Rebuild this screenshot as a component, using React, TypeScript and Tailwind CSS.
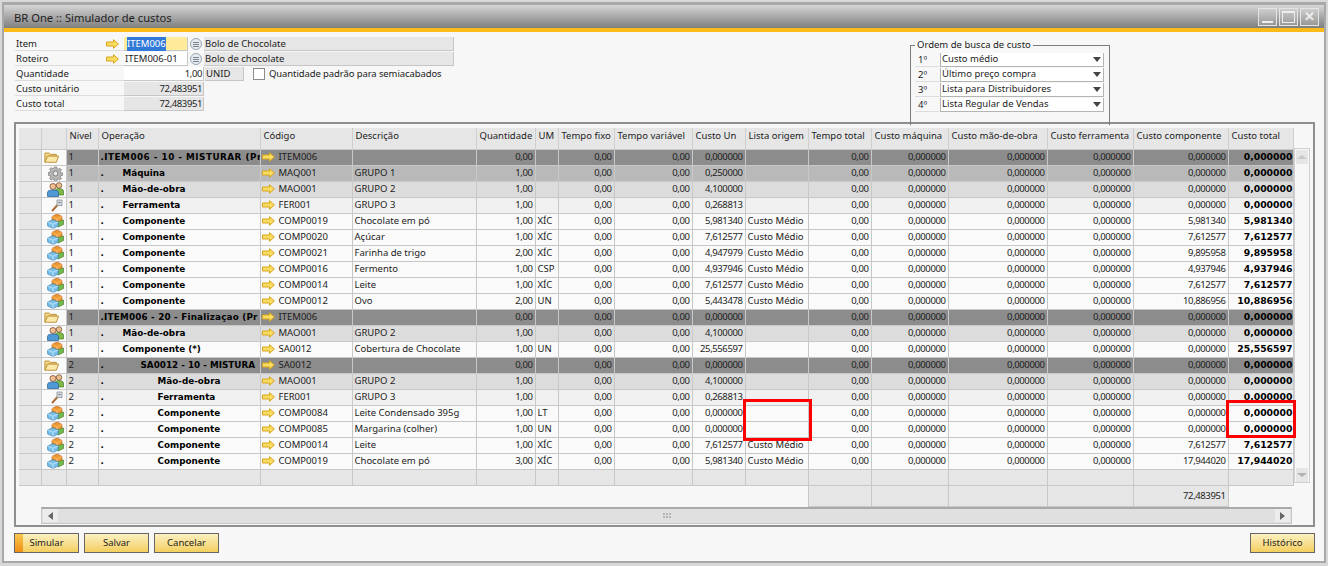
import React from "react"

type Kind = "group" | "maq" | "mao" | "fer" | "comp"

interface Row {
  kind: Kind
  nivel: string
  op: string
  indent?: string
  dot?: boolean
  code: string
  desc?: string
  qty: string
  um?: string
  un: string
  lista?: string
  comp?: string
  total?: string
}

const rows: Row[] = [
  { kind: "group", nivel: "1", op: ".ITEM006 - 10 - MISTURAR (Pr", indent: "tracking-[0.5px]", code: "ITEM006", qty: "0,00", un: "0,000000" },
  { kind: "maq", nivel: "1", op: "Máquina", dot: true, indent: "pl-[19px]", code: "MAQ001", desc: "GRUPO 1", qty: "1,00", un: "0,250000" },
  { kind: "mao", nivel: "1", op: "Mão-de-obra", dot: true, indent: "pl-[19px]", code: "MAO001", desc: "GRUPO 2", qty: "1,00", un: "4,100000" },
  { kind: "fer", nivel: "1", op: "Ferramenta", dot: true, indent: "pl-[19px]", code: "FER001", desc: "GRUPO 3", qty: "1,00", un: "0,268813" },
  { kind: "comp", nivel: "1", op: "Componente", dot: true, indent: "pl-[19px]", code: "COMP0019", desc: "Chocolate em pó", qty: "1,00", um: "XÍC", un: "5,981340", lista: "Custo Médio", comp: "5,981340", total: "5,981340" },
  { kind: "comp", nivel: "1", op: "Componente", dot: true, indent: "pl-[19px]", code: "COMP0020", desc: "Açúcar", qty: "1,00", um: "XÍC", un: "7,612577", lista: "Custo Médio", comp: "7,612577", total: "7,612577" },
  { kind: "comp", nivel: "1", op: "Componente", dot: true, indent: "pl-[19px]", code: "COMP0021", desc: "Farinha de trigo", qty: "2,00", um: "XÍC", un: "4,947979", lista: "Custo Médio", comp: "9,895958", total: "9,895958" },
  { kind: "comp", nivel: "1", op: "Componente", dot: true, indent: "pl-[19px]", code: "COMP0016", desc: "Fermento", qty: "1,00", um: "CSP", un: "4,937946", lista: "Custo Médio", comp: "4,937946", total: "4,937946" },
  { kind: "comp", nivel: "1", op: "Componente", dot: true, indent: "pl-[19px]", code: "COMP0014", desc: "Leite", qty: "1,00", um: "XÍC", un: "7,612577", lista: "Custo Médio", comp: "7,612577", total: "7,612577" },
  { kind: "comp", nivel: "1", op: "Componente", dot: true, indent: "pl-[19px]", code: "COMP0012", desc: "Ovo", qty: "2,00", um: "UN", un: "5,443478", lista: "Custo Médio", comp: "10,886956", total: "10,886956" },
  { kind: "group", nivel: "1", op: ".ITEM006 - 20 - Finalizaçao (Pr", indent: "tracking-[0.2px]", code: "ITEM006", qty: "0,00", un: "0,000000" },
  { kind: "mao", nivel: "1", op: "Mão-de-obra", dot: true, indent: "pl-[19px]", code: "MAO001", desc: "GRUPO 2", qty: "1,00", un: "4,100000" },
  { kind: "comp", nivel: "1", op: "Componente (*)", dot: true, indent: "pl-[19px]", code: "SA0012", desc: "Cobertura de Chocolate", qty: "1,00", um: "UN", un: "25,556597", total: "25,556597" },
  { kind: "group", nivel: "2", op: "SA0012 - 10 - MISTURA", dot: true, indent: "pl-[37px]", code: "SA0012", qty: "0,00", un: "0,000000" },
  { kind: "mao", nivel: "2", op: "Mão-de-obra", dot: true, indent: "pl-[54px]", code: "MAO001", desc: "GRUPO 2", qty: "1,00", un: "4,100000" },
  { kind: "fer", nivel: "2", op: "Ferramenta", dot: true, indent: "pl-[54px]", code: "FER001", desc: "GRUPO 3", qty: "1,00", un: "0,268813" },
  { kind: "comp", nivel: "2", op: "Componente", dot: true, indent: "pl-[54px]", code: "COMP0084", desc: "Leite Condensado 395g", qty: "1,00", um: "LT", un: "0,000000" },
  { kind: "comp", nivel: "2", op: "Componente", dot: true, indent: "pl-[54px]", code: "COMP0085", desc: "Margarina (colher)", qty: "1,00", um: "UN", un: "0,000000" },
  { kind: "comp", nivel: "2", op: "Componente", dot: true, indent: "pl-[54px]", code: "COMP0014", desc: "Leite", qty: "1,00", um: "XÍC", un: "7,612577", lista: "Custo Médio", comp: "7,612577", total: "7,612577" },
  { kind: "comp", nivel: "2", op: "Componente", dot: true, indent: "pl-[54px]", code: "COMP0019", desc: "Chocolate em pó", qty: "3,00", um: "XÍC", un: "5,981340", lista: "Custo Médio", comp: "17,944020", total: "17,944020" },
]

const headers = [
  "", "", "Nivel", "Operação", "Código", "Descrição", "Quantidade", "UM", "Tempo fixo", "Tempo variável", "Custo Un",
  "Lista origem", "Tempo total", "Custo máquina", "Custo mão-de-obra", "Custo ferramenta", "Custo componente", "Custo total",
]

const rowBg: Record<Kind, string> = {
  group: "bg-[#8c8c8c]",
  maq: "bg-[#b9b9b9]",
  mao: "bg-[#dcdcdc]",
  fer: "bg-[#f0f0f0]",
  comp: "bg-[#fafafa]",
}

const cell = "border-r border-b border-[#c8c8c8] px-[2px] overflow-hidden whitespace-nowrap"
const num = cell + " text-right tracking-[-0.4px]"

const Arrow = () => (
  <svg width="13" height="10" viewBox="0 0 13 10" className="shrink-0">
    <path d="M0.5 3h7V0.7L12.4 5 7.5 9.3V7h-7z" fill="#f7dc5e" stroke="#d9a520" strokeWidth="1" />
  </svg>
)

const Folder = () => (
  <svg width="17" height="14" viewBox="0 0 17 14" className="mr-[5px]">
    <path d="M1 2.5h5l1.5 1.5H14v2H4L1 12.5z" fill="#f5d98a" stroke="#b98a2e" />
    <path d="M4 6h12.5L14 13H1z" fill="#fbe7a8" stroke="#b98a2e" />
  </svg>
)

const Gear = () => (
  <svg width="15" height="15" viewBox="0 0 16 16" className="mr-[1px]">
    <path
      d="M6.8 1h2.4l.3 2 1.4.6 1.7-1.2 1.7 1.7-1.2 1.7.6 1.4 2 .3v2.4l-2 .3-.6 1.4 1.2 1.7-1.7 1.7-1.7-1.2-1.4.6-.3 2H6.8l-.3-2-1.4-.6-1.7 1.2-1.7-1.7 1.2-1.7-.6-1.4-2-.3V6.8l2-.3.6-1.4-1.2-1.7 1.7-1.7 1.7 1.2 1.4-.6z"
      fill="#b5b5b5"
      stroke="#7c7c7c"
      strokeWidth="0.8"
    />
    <circle cx="8" cy="8" r="2.6" fill="#e9e9e9" stroke="#7c7c7c" />
  </svg>
)

const People = () => (
  <svg width="17" height="15" viewBox="0 0 17 15">
    <circle cx="12" cy="3.5" r="2.8" fill="#e9b98a" stroke="#6d4a2a" strokeWidth="0.7" />
    <path d="M8 13V9c0-1.5 1.5-2.5 4-2.5s4.500 1 4.500 2.500v4z" fill="#7cb84a" stroke="#4d7d2a" strokeWidth="0.7" />
    <circle cx="6" cy="4.500" r="3" fill="#f0c090" stroke="#7a3a20" strokeWidth="0.7" />
    <path d="M0.500 14.500v-4C0.500 8.800 2.500 8 6 8s5.500 0.800 5.500 2.500v4z" fill="#4f9ad6" stroke="#1f5f95" strokeWidth="0.7" />
  </svg>
)

const Wrench = () => (
  <svg width="12" height="14" viewBox="0 0 12 14" className="mr-[1px]">
    <path d="M1.500 12.500l4.500-5" stroke="#a8703a" strokeWidth="2" strokeLinecap="round" />
    <path d="M6 2h5v5.500H6z" fill="#d5d8dc" stroke="#8a9096" strokeWidth="0.8" />
    <path d="M7.500 4.500h2" stroke="#6f757b" strokeWidth="1" />
  </svg>
)

const Box = () => (
  <svg width="17" height="16" viewBox="0 0 17 16">
    <path d="M5 3.500L10 1l5 2.500v6L10 12 5 9.500z" fill="#f0962e" stroke="#b9651a" strokeWidth="0.7" />
    <path d="M5 3.500L10 6l5-2.500M10 6v6" stroke="#f9cf8a" strokeWidth="0.7" fill="none" />
    <path d="M11 8.500l5.500-1.500v4.500L11 14z" fill="#74b84c" stroke="#4a8430" strokeWidth="0.7" />
    <path d="M0.700 9L6 6.700 11.300 9v4L6 15.300 0.700 13z" fill="#7cc0ea" stroke="#3a80b5" strokeWidth="0.7" />
    <path d="M0.700 9L6 11.300 11.300 9M6 11.300v4" stroke="#d5effc" strokeWidth="0.7" fill="none" />
  </svg>
)

const kindIcon: Record<Kind, React.ReactNode> = {
  group: <Folder />,
  maq: <Gear />,
  mao: <People />,
  fer: <Wrench />,
  comp: <Box />,
}

const Lookup = () => (
  <span className="ml-[2px] flex h-[12px] w-[12px] shrink-0 flex-col items-center justify-center gap-[1px] rounded-full border border-[#9aa6b2] bg-[#e8ecf0]">
    <span className="h-px w-[6px] bg-[#77828d]" />
    <span className="h-px w-[6px] bg-[#77828d]" />
    <span className="h-px w-[6px] bg-[#77828d]" />
  </span>
)

const FormLabel = ({ children, arrow }: { children: string; arrow?: boolean }) => (
  <div className="flex h-[14px] w-[109px] items-center justify-between border-b border-[#dcdcdc] pl-[1px] pr-[5px]">
    <span>{children}</span>
    {arrow && <Arrow />}
  </div>
)

const ReadOnly = ({ children, className }: { children: string; className: string }) => (
  <div className={"flex h-[14px] items-center border-b border-r border-[#c6c6c6] bg-[#e6e6e6] px-[1px] " + className}>{children}</div>
)

const Field = ({ children, className }: { children: React.ReactNode; className: string }) => (
  <div className={"flex h-[14px] items-center border-b border-r border-[#c6c6c6] px-[1px] " + className}>{children}</div>
)

const OrderRow = ({ n, text }: { n: string; text: string }) => (
  <div className="flex h-[15px] items-center">
    <span className="h-[14px] w-[24px] border-b border-[#dcdcdc] pl-[3px]">{n}</span>
    <div className="ml-[1px] flex h-[14px] w-[164px] items-center justify-between border-b border-r border-l border-[#b4b4b4] bg-white pl-[1px] pr-[2px]">
      <span>{text}</span>
      <span className="h-0 w-0 border-x-[4px] border-t-[5px] border-x-transparent border-t-[#444]" />
    </div>
  </div>
)

const Btn = ({ children, active }: { children: string; active?: boolean }) => (
  <button className="relative h-[20px] w-[65px] border border-[#666] bg-gradient-to-b from-[#fbf0c0] to-[#f4cf5c] text-center text-[#222]">
    {active && <span className="absolute inset-y-0 left-0 w-[8px] bg-gradient-to-b from-[#f9c84a] to-[#ee8f14]" />}
    <span className="relative">{children}</span>
  </button>
)

const WinBtn = ({ children }: { children: React.ReactNode }) => (
  <div className="flex h-[18px] w-[19px] items-center justify-center border border-[#e4e4e4] bg-[#ffffff22]">{children}</div>
)

export default function App() {
  return (
    <div className="h-[566px] w-[1328px] overflow-hidden bg-[#d8d8d8] pl-[2px] pr-[2px] pt-[2px] font-['Noto_Sans',sans-serif] text-[9.5px] leading-[14px] text-[#1c1c1c]">
      <div className="flex h-[561px] w-[1324px] flex-col border-2 border-t-[3px] border-[#a8a8a8] bg-[#f7f7f7]">
        {/* barra de título */}
        <div className="flex h-[23px] shrink-0 items-center justify-between bg-gradient-to-b from-[#d6d6d6] to-[#7f7f7f] pl-[10px] pr-[5px]">
          <span className="pt-[3px] text-[11.2px] text-[#222]">BR One :: Simulador de custos</span>
          <div className="flex gap-[2px]">
            <WinBtn><span className="mt-[10px] h-[2px] w-[11px] bg-[#eee]" /></WinBtn>
            <WinBtn><span className="h-[12px] w-[13px] border border-t-[2px] border-[#eee]" /></WinBtn>
            <WinBtn><span className="text-[13px] font-bold leading-none text-[#eee]">✕</span></WinBtn>
          </div>
        </div>
        <div className="h-[4px] shrink-0 bg-[#fdbb1a]" />

        {/* cabeçalho do formulário */}
        <div className="flex h-[90px] shrink-0 pl-[11px] pt-[5px]">
          <div className="flex w-[895px] flex-col gap-px">
            <div className="flex items-center">
              <FormLabel arrow>Item</FormLabel>
              <Field className="w-[64px] bg-[#ffeb99] pl-[3px]">
                <span className="bg-[#3079d8] text-white">ITEM006</span>
              </Field>
              <Lookup />
              <ReadOnly className="ml-[2px] w-[250px]">Bolo de Chocolate</ReadOnly>
            </div>
            <div className="flex items-center">
              <FormLabel arrow>Roteiro</FormLabel>
              <Field className="w-[64px] bg-white">ITEM006-01</Field>
              <Lookup />
              <ReadOnly className="ml-[2px] w-[250px]">Bolo de chocolate</ReadOnly>
            </div>
            <div className="flex items-center">
              <FormLabel>Quantidade</FormLabel>
              <Field className="w-[80px] justify-end bg-white tracking-[-0.4px]">1,00</Field>
              <ReadOnly className="ml-px w-[39px]">UNID</ReadOnly>
              <span className="ml-[9px] h-[12px] w-[12px] border border-[#8c8c8c] bg-white" />
              <span className="ml-[4px] tracking-[-0.1px]">Quantidade padrão para semiacabados</span>
            </div>
            <div className="flex items-center">
              <FormLabel>Custo unitário</FormLabel>
              <ReadOnly className="w-[80px] justify-end tracking-[-0.4px]">72,483951</ReadOnly>
            </div>
            <div className="flex items-center">
              <FormLabel>Custo total</FormLabel>
              <ReadOnly className="w-[80px] justify-end tracking-[-0.4px]">72,483951</ReadOnly>
            </div>
          </div>
          <fieldset className="relative z-10 mt-[2px] h-[86px] w-[200px] border border-b-0 border-[#7c7c7c] pl-[4px] pt-[1px]">
            <legend className="px-[2px] leading-[12px]">Ordem de busca de custo</legend>
            <OrderRow n="1º" text="Custo médio" />
            <OrderRow n="2º" text="Último preço compra" />
            <OrderRow n="3º" text="Lista para Distribuidores" />
            <OrderRow n="4º" text="Lista Regular de Vendas" />
          </fieldset>
        </div>

        {/* grade */}
        <div className="relative ml-[10px] h-[405px] w-[1301px] shrink-0 border-2 border-[#8f8f8f] pl-[3px] pt-[4px]">
          <div className="flex">
            <table className="w-[1274px] table-fixed border-collapse">
              <colgroup>
                <col className="w-[22px]" />
                <col className="w-[25px]" />
                <col className="w-[32px]" />
                <col className="w-[162px]" />
                <col className="w-[92px]" />
                <col className="w-[124px]" />
                <col className="w-[59px]" />
                <col className="w-[23px]" />
                <col className="w-[56px]" />
                <col className="w-[78px]" />
                <col className="w-[53px]" />
                <col className="w-[63px]" />
                <col className="w-[63px]" />
                <col className="w-[77px]" />
                <col className="w-[99px]" />
                <col className="w-[86px]" />
                <col className="w-[95px]" />
                <col className="w-[65px]" />
              </colgroup>
              <thead>
                <tr className="h-[21px] bg-[#e6e6e6]">
                  {headers.map((h, i) => (
                    <th key={i} className={cell + " border-r-[#cfcfcf] pl-[3px] pb-[4px] text-left font-normal"}>{h}</th>
                  ))}
                </tr>
              </thead>
              <tbody>
                {rows.map((r, i) => {
                  const bg = rowBg[r.kind]
                  const td = num + " " + bg
                  const bold = r.total ?? "0,000000"
                  return (
                    <tr key={i} className="h-[16px] leading-[14px]">
                      <td className={cell + " bg-[#e6e6e6]"} />
                      <td className={cell + " bg-[#fafafa] p-0"}>
                        <div className="flex h-[15px] items-center justify-end overflow-hidden">{kindIcon[r.kind]}</div>
                      </td>
                      <td className={cell + " " + bg}>{r.nivel}</td>
                      <td className={cell + " " + bg + " font-['DejaVu_Sans',sans-serif] text-[8.8px] font-bold text-black"}>
                        {r.dot && <span className="inline-block w-[3px]">.</span>}
                        <span className={r.indent}>{r.op}</span>
                      </td>
                      <td className={cell + " " + bg}>
                        <div className="-ml-[1px] flex items-center">
                          <span className="mr-[4px]"><Arrow /></span>
                          {r.code}
                        </div>
                      </td>
                      <td className={cell + " " + bg}>{r.desc}</td>
                      <td className={td}>{r.qty}</td>
                      <td className={cell + " " + bg}>{r.um}</td>
                      <td className={td}>0,00</td>
                      <td className={td}>0,00</td>
                      <td className={td}>{r.un}</td>
                      <td className={cell + " " + bg}>{r.lista}</td>
                      <td className={td}>0,00</td>
                      <td className={td}>0,000000</td>
                      <td className={td}>0,000000</td>
                      <td className={td}>0,000000</td>
                      <td className={td}>{r.comp ?? "0,000000"}</td>
                      <td className={cell + " " + bg + " pr-0 text-right font-['DejaVu_Sans',sans-serif] text-[9.3px] font-bold text-black"}>{bold}</td>
                    </tr>
                  )
                })}
                <tr className="h-[16px] bg-[#e6e6e6]">
                  {headers.map((h, i) => (
                    <td key={i} className={cell} />
                  ))}
                </tr>
                <tr className="h-[21px]">
                  <td colSpan={11} className="border-b-0" />
                  <td className="border-r border-[#c8c8c8]" />
                  <td className={cell + " bg-[#e6e6e6]"} />
                  <td className={cell + " bg-[#e6e6e6]"} />
                  <td className={cell + " bg-[#e6e6e6]"} />
                  <td className={cell + " bg-[#e6e6e6]"} />
                  <td className={num + " bg-[#e6e6e6]"}>72,483951</td>
                  <td />
                </tr>
              </tbody>
            </table>
            {/* barra de rolagem vertical */}
            <div className="mt-[20px] flex h-[335px] w-[16px] flex-col justify-between border border-[#d0d0d0] px-[1px] pt-[1px]">
              <div className="flex h-[14px] items-center justify-center bg-[#e6e6e6]"><span className="h-0 w-0 border-x-[5px] border-b-[4px] border-x-transparent border-b-[#c8c8c8]" /></div>
              <div className="flex h-[14px] items-center justify-center bg-[#e6e6e6]"><span className="h-0 w-0 border-x-[5px] border-t-[4px] border-x-transparent border-t-[#b0b0b0]" /></div>
            </div>
          </div>
          {/* barra de rolagem horizontal */}
          <div className="ml-[22px] flex h-[17px] w-[1251px] items-center justify-between border border-t-2 border-[#c8c8c8] border-t-[#aaaaaa] bg-[#e0e0e0] px-[1px]">
            <div className="flex h-[13px] w-[15px] items-center justify-center bg-[#ececec]"><span className="h-0 w-0 border-y-[4px] border-r-[5px] border-y-transparent border-r-[#666]" /></div>
            <div className="grid grid-cols-3 gap-[1px]">
              {[0, 1, 2, 3, 4, 5].map((d) => <span key={d} className="h-[2px] w-[2px] bg-[#b5b5b5]" />)}
            </div>
            <div className="flex h-[13px] w-[15px] items-center justify-center bg-[#ececec]"><span className="h-0 w-0 border-y-[4px] border-l-[5px] border-y-transparent border-l-[#666]" /></div>
          </div>
          {/* destaques em vermelho */}
          <div className="absolute left-[727px] top-[275px] h-[42px] w-[69px] border-[3px] border-[#ff0000]" />
          <div className="absolute left-[1210px] top-[276px] h-[38px] w-[70px] border-[3px] border-[#ff0000]" />
        </div>

        {/* botões */}
        <div className="ml-[10px] mt-[6px] flex w-[1301px] gap-[5px]">
          <Btn active>Simular</Btn>
          <Btn>Salvar</Btn>
          <Btn>Cancelar</Btn>
          <div className="ml-auto"><Btn>Histórico</Btn></div>
        </div>
      </div>
    </div>
  )
}
